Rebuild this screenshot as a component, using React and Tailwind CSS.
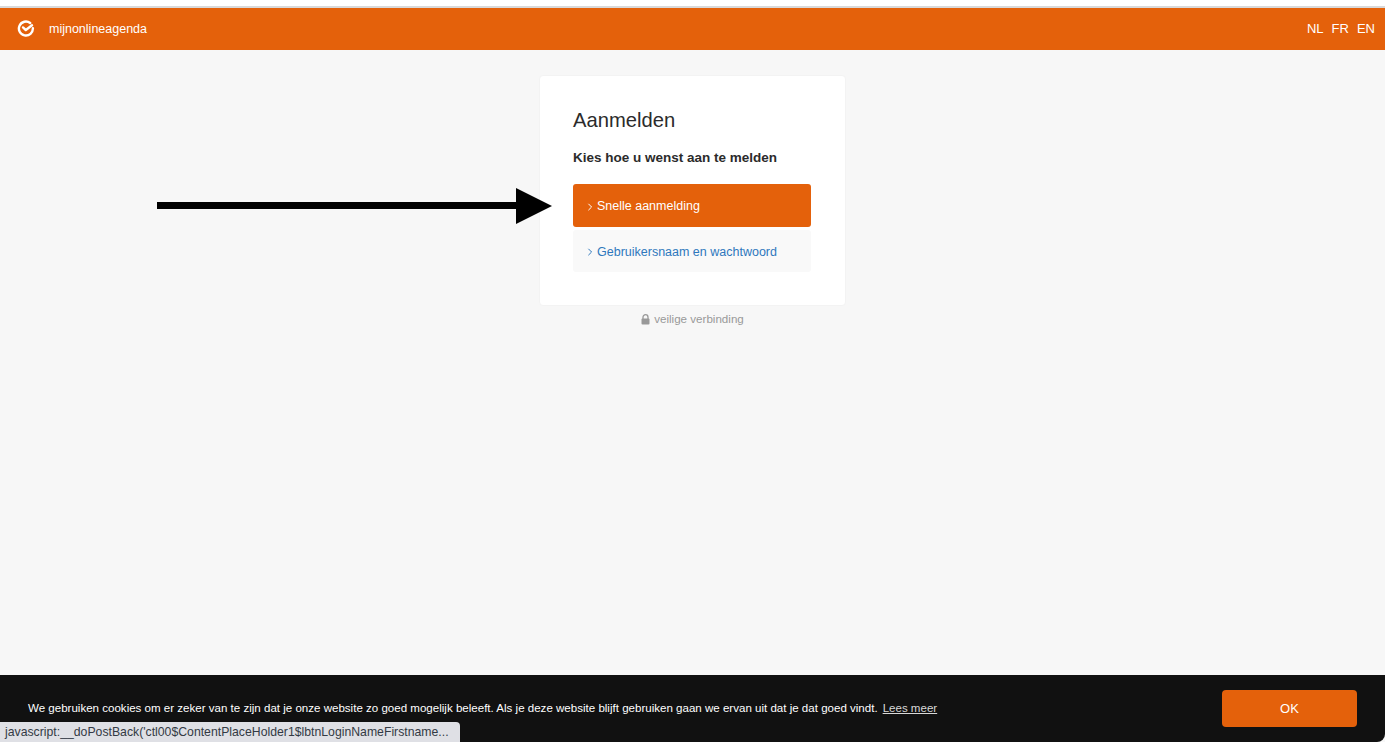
import React from 'react';

const LogoMark = () => (
  <svg width="18" height="18" viewBox="0 0 18 18" fill="none" className="shrink-0">
    <path d="M13.2 3A7 7 0 1 0 15.9 8.2" stroke="#fff" strokeWidth="2.4" strokeLinecap="round" />
    <path d="M6 7.4 8.8 10 15 5.2" stroke="#fff" strokeWidth="2.4" strokeLinecap="round" strokeLinejoin="round" />
  </svg>
);

const Chevron = () => (
  <svg width="6" height="8" viewBox="0 0 6 8" fill="none" className="shrink-0">
    <path d="M1.4.8 4.6 4 1.4 7.2" stroke="currentColor" strokeWidth="1" />
  </svg>
);

const Lock = () => (
  <svg width="9" height="11" viewBox="0 0 9 11" className="shrink-0">
    <path d="M2 5V3.2a2.5 2.5 0 0 1 5 0V5" fill="none" stroke="#999" strokeWidth="1.3" />
    <rect x="0.5" y="4.6" width="8" height="5.9" rx="1" fill="#999" />
  </svg>
);

const App = () => {
  return (
    <div className="relative h-[742px] w-[1385px] overflow-hidden bg-[#f7f7f7] font-['Liberation_Sans',Arial,sans-serif]">
      {/* Top strip + header */}
      <div className="h-[8px] bg-white border-b-2 border-[#d9d9d9]"></div>
      <header className="h-[42px] bg-[#e4610b] flex items-center justify-between pl-[17px] pr-[10px] text-white text-[12.5px]">
        <div className="flex items-center gap-[14px]">
          <LogoMark />
          <span>mijnonlineagenda</span>
        </div>
        <nav className="flex items-center gap-[8px] text-[13px]">
          <span>NL</span>
          <span>FR</span>
          <span>EN</span>
        </nav>
      </header>

      {/* Login card */}
      <main className="flex flex-col items-center pt-[25px]">
        <div className="w-[307px] h-[231px] bg-white rounded-[4px] border border-[#f3f3f3] pt-[32px] px-[33px]">
          <h1 className="text-[20.2px] leading-[24px] text-[#2b2b2b]">Aanmelden</h1>
          <p className="mt-[18px] text-[13.5px] leading-[16px] font-bold text-[#2b2b2b]">Kies hoe u wenst aan te melden</p>
          <button className="mt-[18px] w-[238px] h-[43px] bg-[#e4610b] rounded-[3px] flex items-center gap-[4px] pl-[14px] pt-[2px] text-white text-[12.5px]">
            <Chevron />
            Snelle aanmelding
          </button>
          <button className="mt-[3px] w-[238px] h-[42px] bg-[#f9f9f9] rounded-[3px] flex items-center gap-[4px] pl-[14px] pt-[2px] text-[#2f78bd] text-[12.5px]">
            <Chevron />
            Gebruikersnaam en wachtwoord
          </button>
        </div>
        <div className="mt-[6px] flex items-center gap-[4px] text-[11.6px] leading-[14px] text-[#999999]">
          <Lock />
          <span>veilige verbinding</span>
        </div>
      </main>

      {/* Annotation arrow */}
      <svg className="absolute left-[157px] top-[188px]" width="396" height="37" viewBox="0 0 396 37">
        <rect x="0" y="14" width="360" height="7" fill="#000" />
        <polygon points="359,0 395,18 359,36" fill="#000" />
      </svg>

      {/* Cookie bar */}
      <div className="absolute left-0 top-[675px] w-[1385px] h-[67px] bg-[#111111] rounded-br-[8px] flex items-center justify-between pl-[28px] pr-[28px] text-[11.55px] text-white">
        <p className="mt-[1px]">
          We gebruiken cookies om er zeker van te zijn dat je onze website zo goed mogelijk beleeft. Als je deze website blijft gebruiken gaan we ervan uit dat je dat goed vindt.
          <a className="ml-[5px] underline text-[#d8d8d8]">Lees meer</a>
        </p>
        <button className="w-[135px] h-[37px] bg-[#e4610b] rounded-[4px] text-[13px] text-white">OK</button>
      </div>

      {/* Browser status bubble */}
      <div className="absolute left-0 top-[722px] w-[460px] h-[20px] bg-[#dfe0e5] rounded-tr-[4px] pl-[5px] text-[12.25px] leading-[20px] text-[#333a44] whitespace-nowrap">
        javascript:__doPostBack('ctl00$ContentPlaceHolder1$lbtnLoginNameFirstname...
      </div>
    </div>
  );
};

export default App;
